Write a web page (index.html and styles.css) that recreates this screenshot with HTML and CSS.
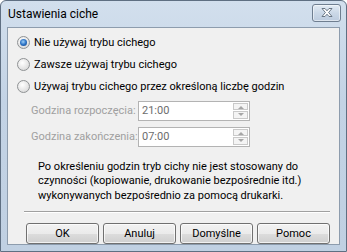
FILE: index.html
```html
<!DOCTYPE html>
<html lang="pl">
<head>
    <meta charset="UTF-8">
    <title>Ustawienia ciche</title>
    <link rel="stylesheet" href="styles.css">
</head>
<body>
    <div class="window">
        <div class="titlebar">
            <span class="title">Ustawienia ciche</span>
            <div class="close-btn">
                <svg width="16" height="11" viewBox="0 0 16 11">
                    <path d="M3 1.5 L6 1.5 L8 3.8 L10 1.5 L13 1.5 L9.6 5.5 L13 9.5 L10 9.5 L8 7.2 L6 9.5 L3 9.5 L6.4 5.5 Z" fill="#fff" stroke="#5d6b7b" stroke-width="0.9" stroke-linejoin="round"/>
                </svg>
            </div>
        </div>
        <div class="client">
            <label class="radio-row">
                <span class="radio checked"></span>
                <span>Nie używaj trybu cichego</span>
            </label>
            <label class="radio-row">
                <span class="radio"></span>
                <span>Zawsze używaj trybu cichego</span>
            </label>
            <label class="radio-row">
                <span class="radio"></span>
                <span>Używaj trybu cichego przez określoną liczbę godzin</span>
            </label>

            <div class="time-row">
                <span class="time-label">Godzina rozpoczęcia:</span>
                <div class="spin">
                    <span class="spin-value">21:00</span>
                    <div class="spin-btns">
                        <span class="spin-up"></span>
                        <span class="spin-down"></span>
                    </div>
                </div>
            </div>
            <div class="time-row">
                <span class="time-label">Godzina zakończenia:</span>
                <div class="spin">
                    <span class="spin-value">07:00</span>
                    <div class="spin-btns">
                        <span class="spin-up"></span>
                        <span class="spin-down"></span>
                    </div>
                </div>
            </div>

            <p class="note">Po określeniu godzin tryb cichy nie jest stosowany do czynności (kopiowanie, drukowanie bezpośrednie itd.) wykonywanych bezpośrednio za pomocą drukarki.</p>

            <div class="separator"></div>

            <div class="buttons">
                <button>OK</button>
                <button>Anuluj</button>
                <button>Domyślne</button>
                <button>Pomoc</button>
            </div>
        </div>
    </div>
</body>
</html>
```

FILE: styles.css
```css
body {
    margin: 0;
    padding: 0;
    font-family: Roboto, 'Liberation Sans', Arial, sans-serif;
    font-size: 11px;
    color: #000;
    background: #fff;
}
.window {
    width: 345px;
    height: 250px;
    border: 1px solid #5f6f82;
    border-radius: 6px 6px 0 0;
    background: linear-gradient(180deg, #d2dfed 0%, #c3d3e5 40%, #c0d0e2 100%);
    display: flex;
    flex-direction: column;
}
.titlebar {
    height: 26px;
    display: flex;
    align-items: center;
    justify-content: space-between;
    padding: 0 5px 0 7px;
}
.title {
    font-size: 12px;
    color: #000;
    margin-top: 1px;
}
.close-btn {
    width: 27px;
    height: 16px;
    border: 1px solid #6f7e90;
    border-radius: 3px;
    background: linear-gradient(180deg, #e3ebf4 0%, #cbd8e7 50%, #bccbde 100%);
    display: flex;
    align-items: center;
    justify-content: center;
    margin-top: -2px;
    box-shadow: inset 0 0 0 1px rgba(255,255,255,0.5);
}
.client {
    flex: 1;
    margin: 0 6px 6px 6px;
    border: 1px solid #8d9cad;
    background: #f0f0f0;
    padding: 4px 0 0 9px;
    display: flex;
    flex-direction: column;
    white-space: nowrap;
}
.radio-row {
    height: 22px;
    display: flex;
    align-items: center;
    gap: 4px;
}
.radio {
    width: 11px;
    height: 11px;
    border-radius: 50%;
    border: 1px solid #8f9294;
    background: radial-gradient(circle at 40% 35%, #ffffff 0%, #e6e6e6 55%, #cfd0d1 100%);
    position: relative;
    flex-shrink: 0;
}
.radio.checked::after {
    content: "";
    position: absolute;
    left: 2px;
    top: 2px;
    width: 7px;
    height: 7px;
    border-radius: 50%;
    background: radial-gradient(circle at 45% 40%, #9fd0f7 0%, #2c73c6 50%, #153f7a 100%);
}
.time-row {
    height: 26px;
    display: flex;
    align-items: center;
    padding-left: 14px;
    color: #a0a0a0;
}
.time-label {
    width: 107px;
}
.spin {
    width: 110px;
    height: 18px;
    border: 1px solid #b3b3b3;
    background: #fff;
    display: flex;
    align-items: center;
    justify-content: space-between;
}
.spin-value {
    padding-left: 3px;
    color: #6d6d6d;
}
.spin-btns {
    width: 15px;
    height: 16px;
    margin-right: 1px;
    display: flex;
    flex-direction: column;
    gap: 1px;
}
.spin-up, .spin-down {
    flex: 1;
    border: 1px solid #c9c9c9;
    background: #f4f4f4;
    position: relative;
}
.spin-up::after, .spin-down::after {
    content: "";
    position: absolute;
    left: 4px;
    top: 2px;
    border-left: 3px solid transparent;
    border-right: 3px solid transparent;
}
.spin-up::after {
    border-bottom: 3px solid #a6a6a6;
}
.spin-down::after {
    border-top: 3px solid #a6a6a6;
    top: 1px;
}
.note {
    margin: 10px 0 0 21px;
    width: 280px;
    line-height: 14.5px;
    white-space: normal;
}
.separator {
    margin: 8px 9px 0 7px;
    height: 1px;
    background: #a0a0a0;
    border-bottom: 1px solid #fff;
}
.buttons {
    margin: 10px 9px 0 9px;
    display: flex;
    justify-content: space-between;
}
button {
    width: 73px;
    height: 21px;
    font-family: Roboto, 'Liberation Sans', Arial, sans-serif;
    font-size: 11px;
    color: #000;
    border: 1px solid #707070;
    border-radius: 3px;
    background: linear-gradient(180deg, #f2f2f2 0%, #ebebeb 50%, #dddddd 51%, #cfcfcf 100%);
    box-shadow: inset 0 0 0 1px rgba(255,255,255,0.7);
    padding: 0;
}
```
